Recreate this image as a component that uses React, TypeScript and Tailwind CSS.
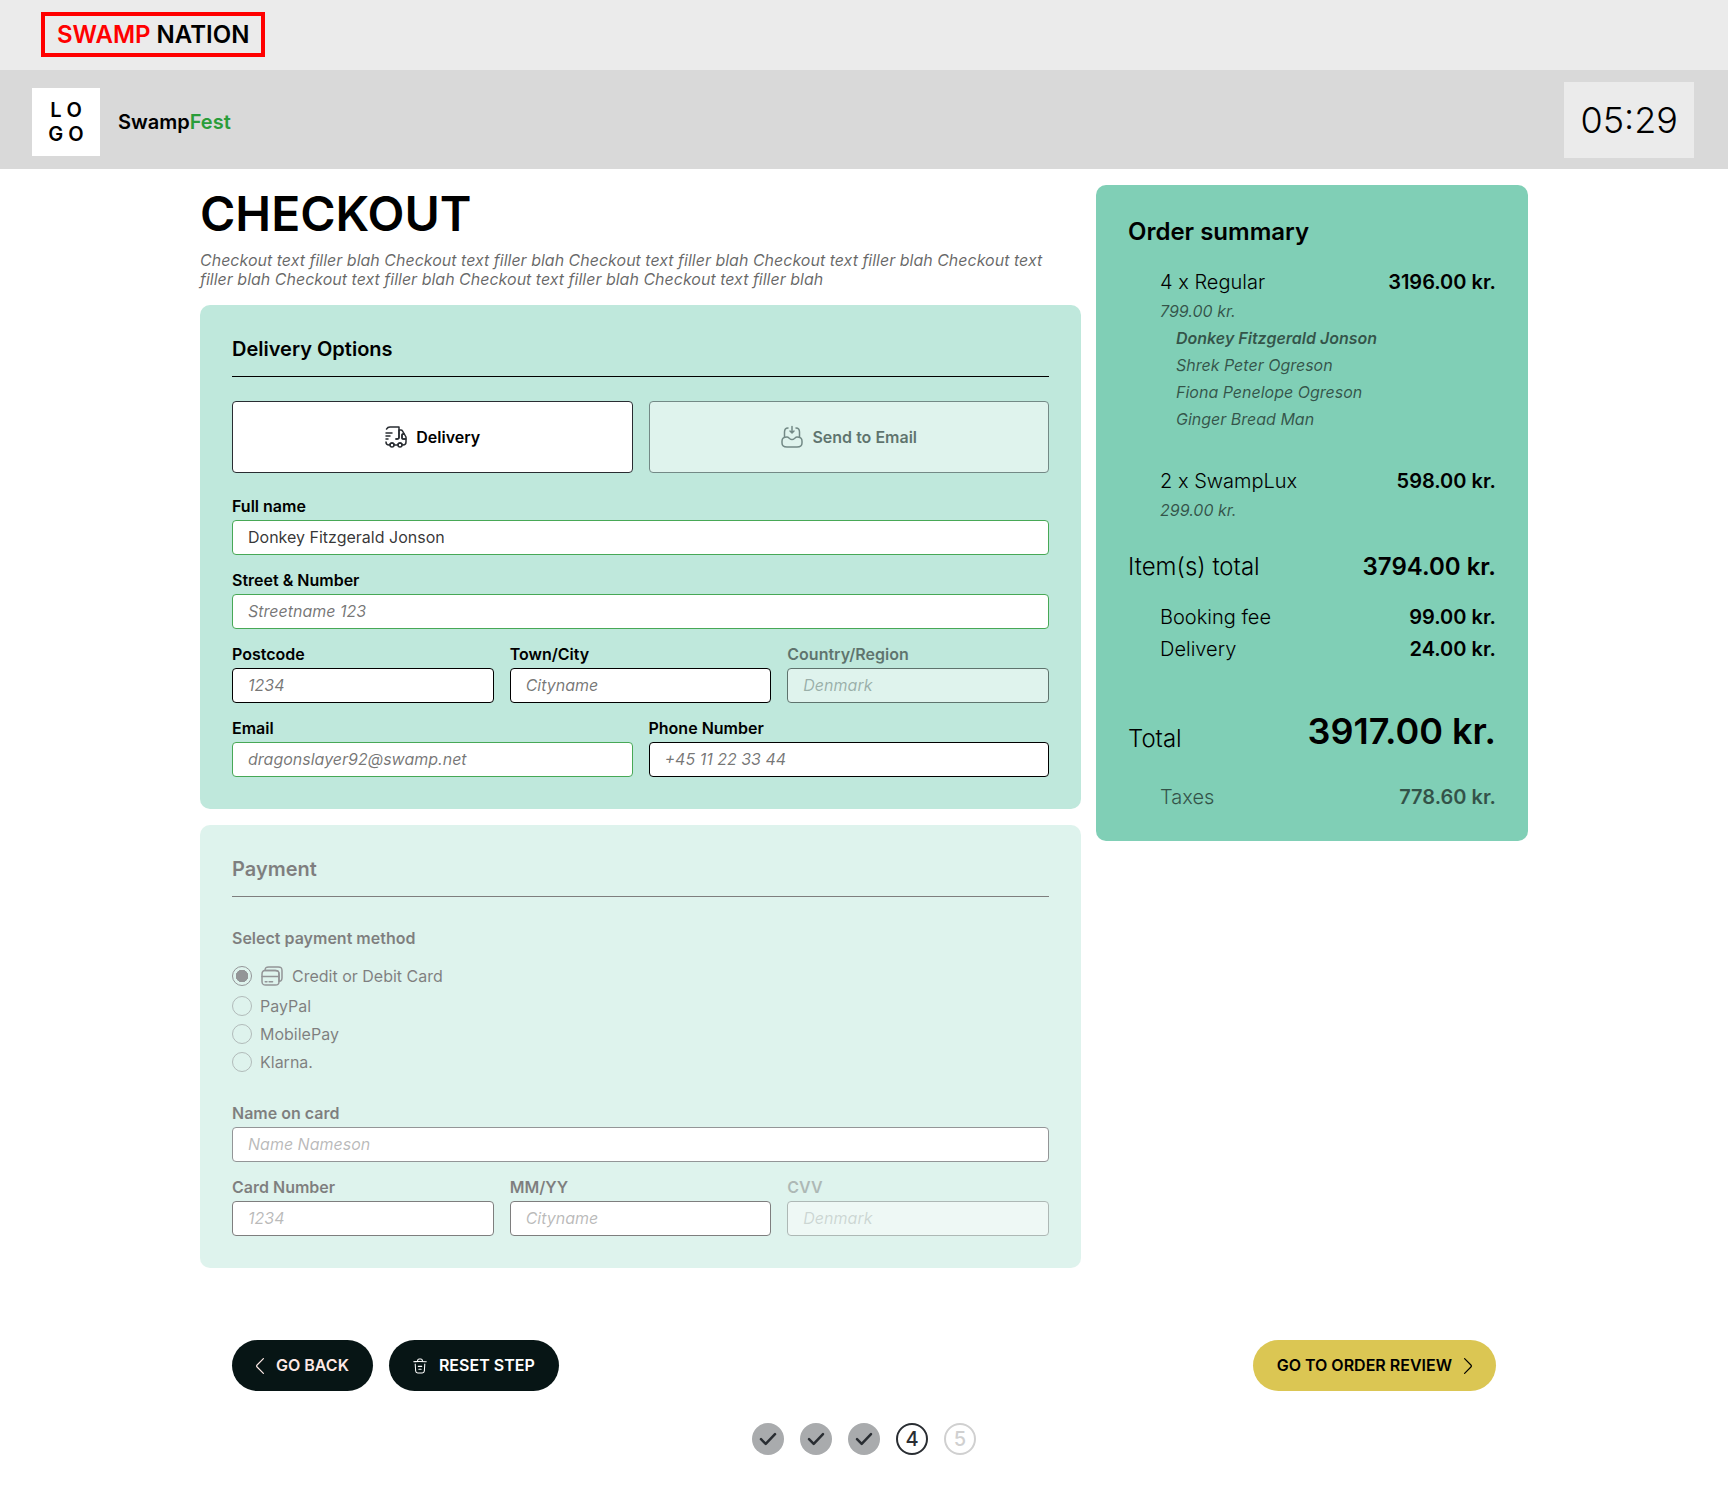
import React from "react";

type IconProps = { className?: string };

function TruckIcon({ className }: IconProps) {
  return (
    <svg viewBox="0 0 24 24" fill="none" stroke="currentColor" strokeWidth="1.5" strokeLinecap="round" strokeLinejoin="round" className={className} aria-hidden="true">
      <path d="M12 14h1c1.1 0 2-.9 2-2V2H6C4.5 2 3.19 2.83 2.51 4.05" />
      <path d="M2 17c0 1.66 1.34 3 3 3h1c0-1.1.9-2 2-2s2 .9 2 2h4c0-1.1.9-2 2-2s2 .9 2 2h1c1.66 0 3-1.34 3-3v-3h-3c-.55 0-1-.45-1-1v-3c0-.55.45-1 1-1h1.29l-1.71-2.99A2.016 2.016 0 0 0 16.84 5H15v7c0 1.1-.9 2-2 2h-1" />
      <path d="M8 22a2 2 0 1 0 0-4 2 2 0 0 0 0 4ZM16 22a2 2 0 1 0 0-4 2 2 0 0 0 0 4ZM22 12v2h-3c-.55 0-1-.45-1-1v-3c0-.55.45-1 1-1h1.29L22 12Z" />
      <path d="M2 8h6M2 11h4M2 14h2" />
    </svg>
  );
}

function InboxIcon({ className }: IconProps) {
  return (
    <svg viewBox="0 0 24 24" fill="none" stroke="currentColor" strokeWidth="1.5" strokeLinecap="round" strokeLinejoin="round" className={className} aria-hidden="true">
      <path d="M12 1.500v6.500l2-2M12 8l-2-2" />
      <path d="M4.500 12V7c0-2.600 1.200-3.900 3.500-4M16 3c2.300.1 3.500 1.400 3.500 4v5" />
      <path d="M7 12c-3.600 0-5 1.300-5 4v2c0 2.700 1.400 4 5 4h10c3.600 0 5-1.300 5-4v-2c0-2.700-1.400-4-5-4-1.900 0-2.700 2.600-5 2.600S8.900 12 7 12Z" />
    </svg>
  );
}

function CardsIcon({ className }: IconProps) {
  return (
    <svg viewBox="0 0 24 24" fill="none" stroke="currentColor" strokeWidth="1.5" strokeLinecap="round" strokeLinejoin="round" className={className} aria-hidden="true">
      <path d="M2 12.610h17" />
      <path d="M19 10.280v7.160C18.970 20.290 18.190 21 15.220 21H5.780C2.760 21 2 20.250 2 17.270v-6.990c0-2.700.63-3.560 3-3.710.24-.01.5-.02.78-.02h9.440c3.020 0 3.780.75 3.780 3.730Z" />
      <path d="M22 6.730v6.990c0 2.700-.63 3.560-3 3.710v-7.150c0-2.980-.76-3.730-3.780-3.730H5.780c-.28 0-.54.01-.78.02C5.030 3.720 5.810 3 8.780 3h9.440C21.240 3 22 3.750 22 6.730Z" />
      <path d="M5.250 17.810h1.720M9.110 17.810h3.440" />
    </svg>
  );
}

function TrashIcon({ className }: IconProps) {
  return (
    <svg viewBox="2 1 20 22" fill="none" stroke="currentColor" strokeWidth="1.5" strokeLinecap="round" strokeLinejoin="round" className={className} aria-hidden="true">
      <path d="M21 5.980c-3.330-.33-6.680-.5-10.020-.5-1.980 0-3.960.1-5.940.3L3 5.980" />
      <path d="m8.500 4.970.22-1.310C8.880 2.710 9 2 10.690 2h2.620c1.690 0 1.820.75 1.970 1.670l.22 1.300" />
      <path d="m18.850 9.140-.65 10.070C18.090 20.780 18 22 15.210 22H8.790C6 22 5.910 20.780 5.800 19.210L5.150 9.140" />
      <path d="M10.330 16.500h3.330M9.500 12.500h5" />
    </svg>
  );
}

function ChevronIcon({ className }: IconProps) {
  return (
    <svg viewBox="0 0 8 16" fill="none" stroke="currentColor" strokeWidth="1.2" strokeLinecap="round" strokeLinejoin="round" className={className} aria-hidden="true">
      <path d="M.6.600 6.900 7q1 1 0 2L.6 15.400" />
    </svg>
  );
}

const borders = {
  valid: "border-[#47a856]",
  plain: "border-black",
  soft: "border-[#292d32]",
};

function Field({
  id,
  label,
  placeholder,
  value,
  tone = "plain",
  disabled = false,
  type = "text",
}: {
  id: string;
  label: string;
  placeholder?: string;
  value?: string;
  tone?: keyof typeof borders;
  disabled?: boolean;
  type?: string;
}) {
  return (
    <div className={`flex min-w-0 flex-col gap-1 ${disabled ? "opacity-50" : ""}`}>
      <label htmlFor={id} className="text-base leading-[19px] font-semibold">
        {label}
      </label>
      <input
        id={id}
        type={type}
        placeholder={placeholder}
        defaultValue={value}
        disabled={disabled}
        className={`h-[35px] w-full rounded border bg-white px-[15px] pb-0.5 text-base font-normal text-black/80 placeholder:text-black/55 placeholder:italic ${borders[tone]}`}
      />
    </div>
  );
}

function PaymentOption({ id, label, checked, icon }: { id: string; label: string; checked?: boolean; icon?: React.ReactNode }) {
  return (
    <div className="flex items-center gap-2">
      <input
        id={id}
        type="radio"
        name="payment"
        defaultChecked={checked}
        className="size-5 shrink-0 appearance-none rounded-full border border-[#292d32]/60 checked:border-[#292d32] checked:bg-[radial-gradient(circle,#292d32_0,#292d32_6px,transparent_6.5px)]"
      />
      <label htmlFor={id} className="flex items-center gap-2 text-base leading-[19px] font-normal">
        {icon}
        {label}
      </label>
    </div>
  );
}

function SummaryRow({ label, price }: { label: string; price: string }) {
  return (
    <div className="flex justify-between pl-8 text-xl leading-6">
      <span className="font-light">{label}</span>
      <span className="font-semibold">{price}</span>
    </div>
  );
}

const attendees = ["Shrek Peter Ogreson", "Fiona Penelope Ogreson", "Ginger Bread Man"];

export default function App() {
  return (
    <div className="bg-white font-[Inter,sans-serif] text-black">
      <header>
        <div className="flex bg-[#ebebeb] pt-3 pb-[13px] pl-[41px]">
          <a href="#" className="border-4 border-[#ff0000] px-3 py-1 text-2xl leading-[29px] font-semibold">
            <span className="text-[#ff0000]">SWAMP</span> NATION
          </a>
        </div>
        <div className="flex items-center justify-between bg-[#d9d9d9] pt-3 pr-[34px] pb-[11px] pl-8">
          <a href="#" className="flex items-center gap-[18px]">
            <span className="mt-1 flex size-[68px] flex-col items-center justify-center bg-white text-xl leading-6 font-semibold">
              <span>L O</span>
              <span>G O</span>
            </span>
            <span className="mt-1 text-xl leading-6 font-semibold">
              Swamp<span className="text-[#2a9d3a]">Fest</span>
            </span>
          </a>
          <time className="bg-[#ebebeb] px-4 py-4 text-4xl leading-[44px] font-light">05:29</time>
        </div>
      </header>

      <main className="mx-auto max-w-[1328px] pt-4 pb-8">
        <div className="flex items-start gap-[15px]">
          <div className="min-w-0 flex-1">
            <h1 className="text-5xl leading-[58px] font-semibold">CHECKOUT</h1>
            <p className="mt-2 pr-4 text-base leading-[19px] font-normal text-black/60 italic">
              Checkout text filler blah Checkout text filler blah Checkout text filler blah Checkout text filler blah
              Checkout text filler blah Checkout text filler blah Checkout text filler blah Checkout text filler blah
            </p>

            <section className="mt-4 rounded-[10px] bg-[#bfe8dc] p-8">
              <h2 className="border-b border-black pb-[15px] text-xl leading-6 font-semibold">Delivery Options</h2>
              <div className="mt-6 grid grid-cols-2 gap-4">
                <button type="button" className="flex h-[72px] items-center justify-center gap-2 rounded border border-[#292d32] bg-white leading-[19px] font-semibold">
                  <TruckIcon className="size-6 text-[#292d32]" />
                  Delivery
                </button>
                <button type="button" className="flex h-[72px] items-center justify-center gap-2 rounded border border-[#292d32] bg-white leading-[19px] font-semibold opacity-50">
                  <InboxIcon className="size-6 text-[#292d32]" />
                  Send to Email
                </button>
              </div>
              <div className="mt-6 flex flex-col gap-4">
                <Field id="full-name" label="Full name" value="Donkey Fitzgerald Jonson" tone="valid" />
                <Field id="street" label="Street &amp; Number" placeholder="Streetname 123" tone="valid" />
                <div className="grid grid-cols-3 gap-4">
                  <Field id="postcode" label="Postcode" placeholder="1234" />
                  <Field id="town" label="Town/City" placeholder="Cityname" />
                  <Field id="country" label="Country/Region" placeholder="Denmark" disabled />
                </div>
                <div className="grid grid-cols-2 gap-4">
                  <Field id="email" label="Email" placeholder="dragonslayer92@swamp.net" tone="valid" type="email" />
                  <Field id="phone" label="Phone Number" placeholder="+45 11 22 33 44" type="tel" />
                </div>
              </div>
            </section>

            <section className="mt-4 rounded-[10px] bg-[#bfe8dc] p-8 opacity-50">
              <h2 className="border-b border-black pb-[15px] text-xl leading-6 font-semibold">Payment</h2>
              <fieldset className="mt-8">
                <legend className="text-base leading-[19px] font-semibold">Select payment method</legend>
                <div className="mt-4 flex flex-col gap-2">
                  <PaymentOption id="pay-card" label="Credit or Debit Card" checked icon={<CardsIcon className="size-6 text-[#292d32]" />} />
                  <PaymentOption id="pay-paypal" label="PayPal" />
                  <PaymentOption id="pay-mobilepay" label="MobilePay" />
                  <PaymentOption id="pay-klarna" label="Klarna." />
                </div>
              </fieldset>
              <div className="mt-8 flex flex-col gap-4">
                <Field id="card-name" label="Name on card" placeholder="Name Nameson" tone="soft" />
                <div className="grid grid-cols-3 gap-4">
                  <Field id="card-number" label="Card Number" placeholder="1234" />
                  <Field id="card-expiry" label="MM/YY" placeholder="Cityname" />
                  <Field id="card-cvv" label="CVV" placeholder="Denmark" disabled />
                </div>
              </div>
            </section>
          </div>

          <aside className="w-[432px] shrink-0 rounded-[10px] bg-[#80cfb6] p-8">
            <h2 className="text-2xl leading-[29px] font-semibold">Order summary</h2>
            <div className="mt-6 flex flex-col gap-2">
              <SummaryRow label="4 x Regular" price="3196.00 kr." />
              <p className="pl-8 text-base leading-[19px] font-normal text-black/60 italic">799.00 kr.</p>
              <ul className="flex flex-col gap-2 pl-12 text-base leading-[19px] font-normal text-black/60 italic">
                <li className="font-semibold">Donkey Fitzgerald Jonson</li>
                {attendees.map((name) => (
                  <li key={name}>{name}</li>
                ))}
              </ul>
            </div>
            <div className="mt-10 flex flex-col gap-2">
              <SummaryRow label="2 x SwampLux" price="598.00 kr." />
              <p className="pl-8 text-base leading-[19px] font-normal text-black/60 italic">299.00 kr.</p>
            </div>
            <div className="mt-8 flex justify-between text-2xl leading-[29px]">
              <span className="font-light">Item(s) total</span>
              <span className="font-semibold">3794.00 kr.</span>
            </div>
            <div className="mt-6 flex flex-col gap-2">
              <SummaryRow label="Booking fee" price="99.00 kr." />
              <SummaryRow label="Delivery" price="24.00 kr." />
            </div>
            <div className="mt-12 flex items-end justify-between">
              <span className="text-2xl leading-[29px] font-light">Total</span>
              <span className="text-4xl leading-[44px] font-semibold">3917.00 kr.</span>
            </div>
            <div className="mt-8 opacity-60">
              <SummaryRow label="Taxes" price="778.60 kr." />
            </div>
          </aside>
        </div>

        <div className="mt-[72px] flex items-center justify-between px-8 text-base leading-[19px] font-semibold">
          <div className="flex gap-4">
            <button type="button" className="flex items-center gap-3 rounded-full bg-[#071515] px-6 py-4 text-[#fde9e6]">
              <ChevronIcon className="h-4 w-2 rotate-180" />
              GO BACK
            </button>
            <button type="button" className="flex items-center gap-3 rounded-full bg-[#071515] px-6 py-4 text-white">
              <TrashIcon className="h-4 w-3.5" />
              RESET STEP
            </button>
          </div>
          <button type="button" className="flex items-center gap-3 rounded-full bg-[#dbc653] px-6 py-4">
            GO TO ORDER REVIEW
            <ChevronIcon className="h-4 w-2" />
          </button>
        </div>

        <ol className="mt-8 flex justify-center gap-4 text-xl leading-6 font-medium text-[#292d32]">
          {[1, 2, 3].map((step) => (
            <li key={step} className="size-8 rounded-full bg-[#a9abad]" aria-label={`Step ${step} done`}>
              <svg viewBox="0 0 32 32" fill="none" stroke="currentColor" strokeWidth="2.5" strokeLinecap="round" strokeLinejoin="round" className="size-8" aria-hidden="true">
                <path d="m9 16.200 4.700 4.700L23 11.200" />
              </svg>
            </li>
          ))}
          <li className="flex size-8 items-center justify-center rounded-full border-2 border-[#292d32]" aria-current="step">
            4
          </li>
          <li className="flex size-8 items-center justify-center rounded-full border-2 border-[#d0d0d0] text-[#d0d0d0]">5</li>
        </ol>
      </main>
    </div>
  );
}
